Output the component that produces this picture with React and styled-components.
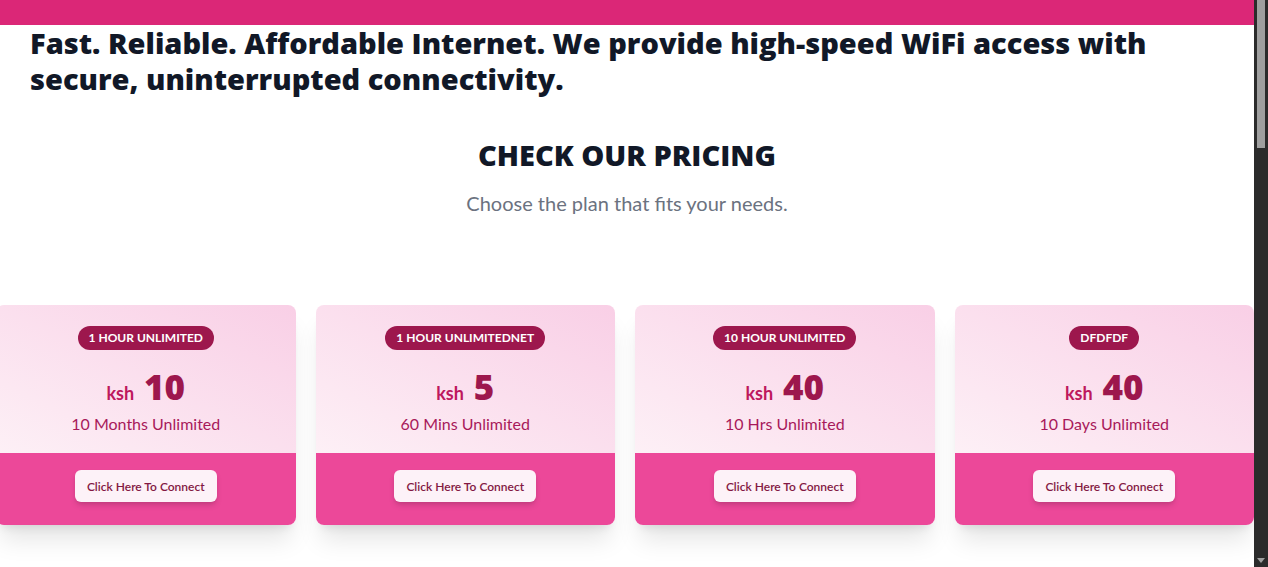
import React from 'react';
import styled, { createGlobalStyle } from 'styled-components';

const GlobalStyle = createGlobalStyle`
  body {
    margin: 0;
    overflow: hidden;
    background: #ffffff;
    font-family: Lato, "Open Sans", "Noto Sans", sans-serif;
    color: #111827;
  }
`;

const Shell = styled.div`
  display: flex;
  height: 567px;
`;

const Page = styled.div`
  flex: 1;
  min-width: 0;
`;

const Scrollbar = styled.div`
  width: 14px;
  flex-shrink: 0;
  display: flex;
  flex-direction: column;
  align-items: center;
  background: #2b2b2b;
`;

const ScrollThumb = styled.div`
  width: 8px;
  height: 148px;
  background: #9f9f9f;
`;

const ScrollSpacer = styled.div`
  flex: 1;
`;

const ScrollArrow = styled.div`
  width: 0;
  height: 0;
  margin-bottom: 4px;
  border-left: 4px solid transparent;
  border-right: 4px solid transparent;
  border-top: 5px solid #9f9f9f;
`;

const TopBar = styled.div`
  height: 25px;
  background: #db2777;
`;

const Hero = styled.h1`
  margin: 0;
  padding: 0 30px;
  font-family: "Open Sans", "Noto Sans", sans-serif;
  font-size: 29px;
  line-height: 36px;
  font-weight: 800;
  letter-spacing: 0;
  color: #111827;
  max-width: 1130px;
`;

const PricingSection = styled.section`
  padding-top: 40px;
  text-align: center;
`;

const Title = styled.h2`
  margin: 0;
  font-family: "Open Sans", "Noto Sans", sans-serif;
  font-size: 29px;
  line-height: 36px;
  font-weight: 800;
  text-transform: uppercase;
  color: #111827;
`;

const Subtitle = styled.p`
  margin: 16px 0 0;
  font-size: 20px;
  line-height: 28px;
  color: #6b7280;
`;

const CardGrid = styled.div`
  display: grid;
  grid-template-columns: repeat(4, 1fr);
  gap: 20px;
  margin: 88px 0 0 -4px;
`;

const Card = styled.div`
  border-radius: 8px;
  overflow: hidden;
  box-shadow: 0 20px 25px -5px rgba(0, 0, 0, 0.1), 0 8px 10px -6px rgba(0, 0, 0, 0.1);
`;

const CardTop = styled.div`
  height: 148px;
  box-sizing: border-box;
  padding-top: 21px;
  display: flex;
  flex-direction: column;
  align-items: center;
  background: linear-gradient(to top right, #fdf0f6, #f9cfe6);
`;

const Badge = styled.span`
  display: inline-block;
  height: 24px;
  line-height: 24px;
  padding: 0 11px;
  border-radius: 999px;
  background: #9d174d;
  color: #ffffff;
  font-size: 12px;
  font-weight: 700;
  text-transform: uppercase;
`;

const PriceRow = styled.div`
  margin-top: 17px;
  display: flex;
  align-items: baseline;
  gap: 10px;
  height: 40px;
`;

const Currency = styled.span`
  font-size: 18px;
  font-weight: 700;
  color: #be185d;
`;

const Amount = styled.span`
  font-family: "Open Sans", "Noto Sans", sans-serif;
  font-size: 35px;
  line-height: 40px;
  font-weight: 800;
  color: #9d174d;
`;

const Duration = styled.div`
  margin-top: 5px;
  font-size: 16px;
  line-height: 24px;
  color: #a8195a;
`;

const CardBottom = styled.div`
  height: 72px;
  box-sizing: border-box;
  padding-top: 17px;
  display: flex;
  align-items: flex-start;
  justify-content: center;
  background: #ec4899;
`;

const ConnectButton = styled.button`
  height: 32px;
  padding: 0 12px;
  border: none;
  border-radius: 6px;
  background: #fdf2f8;
  color: #831843;
  font-family: inherit;
  font-size: 12px;
  font-weight: 600;
  box-shadow: 0 4px 6px -1px rgba(0, 0, 0, 0.15), 0 2px 4px -2px rgba(0, 0, 0, 0.1);
  cursor: pointer;
`;

const plans = [
  { name: '1 Hour Unlimited', price: 10, duration: '10 Months Unlimited' },
  { name: '1 Hour Unlimitednet', price: 5, duration: '60 Mins Unlimited' },
  { name: '10 Hour Unlimited', price: 40, duration: '10 Hrs Unlimited' },
  { name: 'dfdfdf', price: 40, duration: '10 Days Unlimited' },
];

export default function App() {
  return (
    <Shell>
      <GlobalStyle />
      <Page>
        <TopBar />
        <Hero>
          Fast. Reliable. Affordable Internet. We provide high-speed WiFi access with secure,
          uninterrupted connectivity.
        </Hero>
        <PricingSection>
          <Title>Check our pricing</Title>
          <Subtitle>Choose the plan that fits your needs.</Subtitle>
          <CardGrid>
            {plans.map(plan => (
              <Card key={plan.name}>
                <CardTop>
                  <Badge>{plan.name}</Badge>
                  <PriceRow>
                    <Currency>ksh</Currency>
                    <Amount>{plan.price}</Amount>
                  </PriceRow>
                  <Duration>{plan.duration}</Duration>
                </CardTop>
                <CardBottom>
                  <ConnectButton>Click Here To Connect</ConnectButton>
                </CardBottom>
              </Card>
            ))}
          </CardGrid>
        </PricingSection>
      </Page>
      <Scrollbar>
        <ScrollThumb />
        <ScrollSpacer />
        <ScrollArrow />
      </Scrollbar>
    </Shell>
  );
}
